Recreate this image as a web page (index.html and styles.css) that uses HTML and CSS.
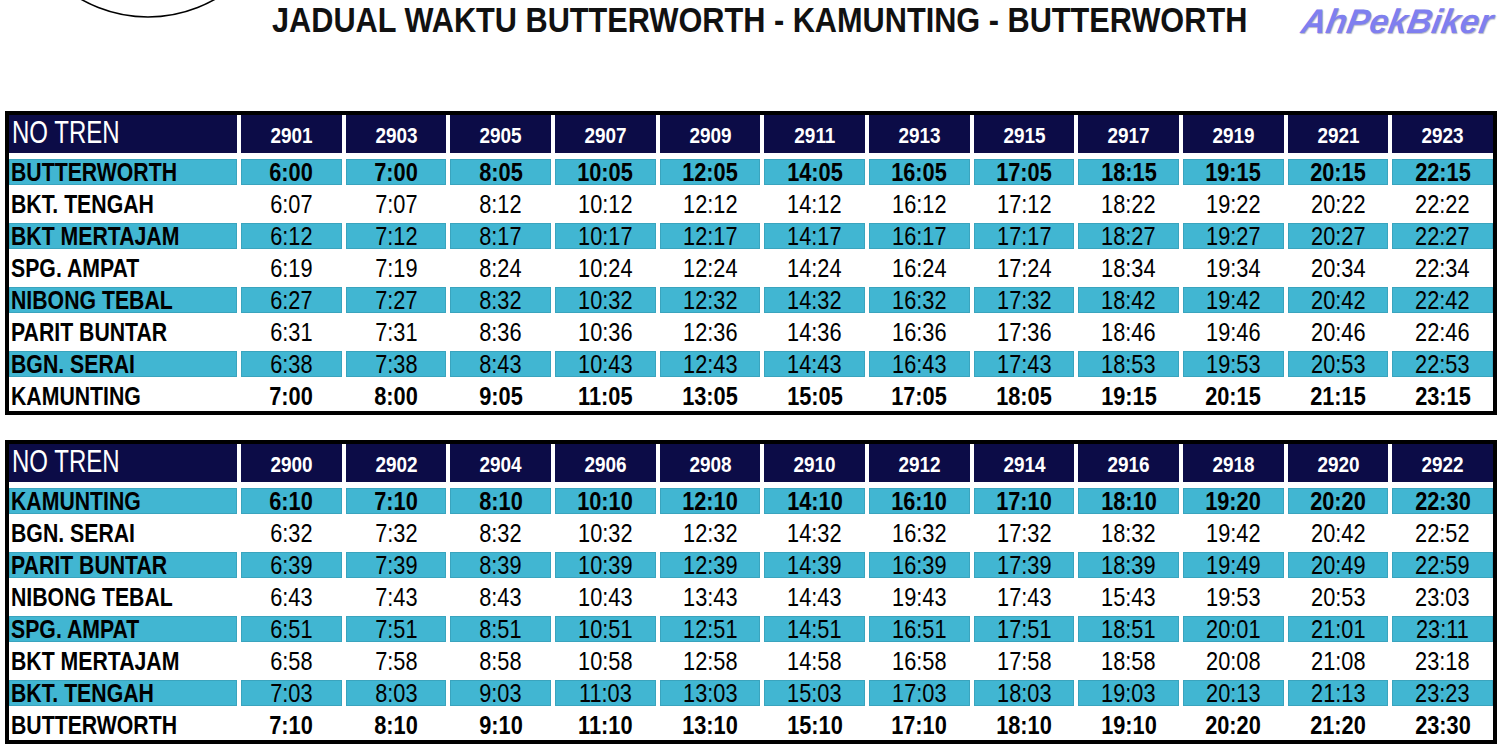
FILE: index.html
```html
<!DOCTYPE html>
<html lang="ms">
<head>
<meta charset="utf-8">
<title>Jadual Waktu Butterworth - Kamunting - Butterworth</title>
<link rel="stylesheet" href="styles.css">
</head>
<body>
<header class="top">
  <div class="arc-box">
    <svg class="arc" width="272" height="22" viewBox="0 0 272 22"><circle cx="148" cy="-118" r="135" fill="none" stroke="#000" stroke-width="1.6"/></svg>
  </div>
  <div class="title-box"><h1 class="title">JADUAL WAKTU BUTTERWORTH - KAMUNTING - BUTTERWORTH</h1></div>
  <div class="logo">AhPekBiker</div>
</header>

<main class="tables">
  <div class="tt">
    <div class="row head"><div class="hname"><span>NO TREN</span></div><div><span>2901</span></div><div><span>2903</span></div><div><span>2905</span></div><div><span>2907</span></div><div><span>2909</span></div><div><span>2911</span></div><div><span>2913</span></div><div><span>2915</span></div><div><span>2917</span></div><div><span>2919</span></div><div><span>2921</span></div><div><span>2923</span></div></div>
    <div class="row band bold"><div><span>BUTTERWORTH</span></div><div><span>6:00</span></div><div><span>7:00</span></div><div><span>8:05</span></div><div><span>10:05</span></div><div><span>12:05</span></div><div><span>14:05</span></div><div><span>16:05</span></div><div><span>17:05</span></div><div><span>18:15</span></div><div><span>19:15</span></div><div><span>20:15</span></div><div><span>22:15</span></div></div>
    <div class="row"><div><span>BKT. TENGAH</span></div><div><span>6:07</span></div><div><span>7:07</span></div><div><span>8:12</span></div><div><span>10:12</span></div><div><span>12:12</span></div><div><span>14:12</span></div><div><span>16:12</span></div><div><span>17:12</span></div><div><span>18:22</span></div><div><span>19:22</span></div><div><span>20:22</span></div><div><span>22:22</span></div></div>
    <div class="row band"><div><span>BKT MERTAJAM</span></div><div><span>6:12</span></div><div><span>7:12</span></div><div><span>8:17</span></div><div><span>10:17</span></div><div><span>12:17</span></div><div><span>14:17</span></div><div><span>16:17</span></div><div><span>17:17</span></div><div><span>18:27</span></div><div><span>19:27</span></div><div><span>20:27</span></div><div><span>22:27</span></div></div>
    <div class="row"><div><span>SPG. AMPAT</span></div><div><span>6:19</span></div><div><span>7:19</span></div><div><span>8:24</span></div><div><span>10:24</span></div><div><span>12:24</span></div><div><span>14:24</span></div><div><span>16:24</span></div><div><span>17:24</span></div><div><span>18:34</span></div><div><span>19:34</span></div><div><span>20:34</span></div><div><span>22:34</span></div></div>
    <div class="row band"><div><span>NIBONG TEBAL</span></div><div><span>6:27</span></div><div><span>7:27</span></div><div><span>8:32</span></div><div><span>10:32</span></div><div><span>12:32</span></div><div><span>14:32</span></div><div><span>16:32</span></div><div><span>17:32</span></div><div><span>18:42</span></div><div><span>19:42</span></div><div><span>20:42</span></div><div><span>22:42</span></div></div>
    <div class="row"><div><span>PARIT BUNTAR</span></div><div><span>6:31</span></div><div><span>7:31</span></div><div><span>8:36</span></div><div><span>10:36</span></div><div><span>12:36</span></div><div><span>14:36</span></div><div><span>16:36</span></div><div><span>17:36</span></div><div><span>18:46</span></div><div><span>19:46</span></div><div><span>20:46</span></div><div><span>22:46</span></div></div>
    <div class="row band"><div><span>BGN. SERAI</span></div><div><span>6:38</span></div><div><span>7:38</span></div><div><span>8:43</span></div><div><span>10:43</span></div><div><span>12:43</span></div><div><span>14:43</span></div><div><span>16:43</span></div><div><span>17:43</span></div><div><span>18:53</span></div><div><span>19:53</span></div><div><span>20:53</span></div><div><span>22:53</span></div></div>
    <div class="row bold"><div><span>KAMUNTING</span></div><div><span>7:00</span></div><div><span>8:00</span></div><div><span>9:05</span></div><div><span>11:05</span></div><div><span>13:05</span></div><div><span>15:05</span></div><div><span>17:05</span></div><div><span>18:05</span></div><div><span>19:15</span></div><div><span>20:15</span></div><div><span>21:15</span></div><div><span>23:15</span></div></div>
  </div>

  <div class="tt">
    <div class="row head"><div class="hname"><span>NO TREN</span></div><div><span>2900</span></div><div><span>2902</span></div><div><span>2904</span></div><div><span>2906</span></div><div><span>2908</span></div><div><span>2910</span></div><div><span>2912</span></div><div><span>2914</span></div><div><span>2916</span></div><div><span>2918</span></div><div><span>2920</span></div><div><span>2922</span></div></div>
    <div class="row band bold"><div><span>KAMUNTING</span></div><div><span>6:10</span></div><div><span>7:10</span></div><div><span>8:10</span></div><div><span>10:10</span></div><div><span>12:10</span></div><div><span>14:10</span></div><div><span>16:10</span></div><div><span>17:10</span></div><div><span>18:10</span></div><div><span>19:20</span></div><div><span>20:20</span></div><div><span>22:30</span></div></div>
    <div class="row"><div><span>BGN. SERAI</span></div><div><span>6:32</span></div><div><span>7:32</span></div><div><span>8:32</span></div><div><span>10:32</span></div><div><span>12:32</span></div><div><span>14:32</span></div><div><span>16:32</span></div><div><span>17:32</span></div><div><span>18:32</span></div><div><span>19:42</span></div><div><span>20:42</span></div><div><span>22:52</span></div></div>
    <div class="row band"><div><span>PARIT BUNTAR</span></div><div><span>6:39</span></div><div><span>7:39</span></div><div><span>8:39</span></div><div><span>10:39</span></div><div><span>12:39</span></div><div><span>14:39</span></div><div><span>16:39</span></div><div><span>17:39</span></div><div><span>18:39</span></div><div><span>19:49</span></div><div><span>20:49</span></div><div><span>22:59</span></div></div>
    <div class="row"><div><span>NIBONG TEBAL</span></div><div><span>6:43</span></div><div><span>7:43</span></div><div><span>8:43</span></div><div><span>10:43</span></div><div><span>13:43</span></div><div><span>14:43</span></div><div><span>19:43</span></div><div><span>17:43</span></div><div><span>15:43</span></div><div><span>19:53</span></div><div><span>20:53</span></div><div><span>23:03</span></div></div>
    <div class="row band"><div><span>SPG. AMPAT</span></div><div><span>6:51</span></div><div><span>7:51</span></div><div><span>8:51</span></div><div><span>10:51</span></div><div><span>12:51</span></div><div><span>14:51</span></div><div><span>16:51</span></div><div><span>17:51</span></div><div><span>18:51</span></div><div><span>20:01</span></div><div><span>21:01</span></div><div><span>23:11</span></div></div>
    <div class="row"><div><span>BKT MERTAJAM</span></div><div><span>6:58</span></div><div><span>7:58</span></div><div><span>8:58</span></div><div><span>10:58</span></div><div><span>12:58</span></div><div><span>14:58</span></div><div><span>16:58</span></div><div><span>17:58</span></div><div><span>18:58</span></div><div><span>20:08</span></div><div><span>21:08</span></div><div><span>23:18</span></div></div>
    <div class="row band"><div><span>BKT. TENGAH</span></div><div><span>7:03</span></div><div><span>8:03</span></div><div><span>9:03</span></div><div><span>11:03</span></div><div><span>13:03</span></div><div><span>15:03</span></div><div><span>17:03</span></div><div><span>18:03</span></div><div><span>19:03</span></div><div><span>20:13</span></div><div><span>21:13</span></div><div><span>23:23</span></div></div>
    <div class="row bold"><div><span>BUTTERWORTH</span></div><div><span>7:10</span></div><div><span>8:10</span></div><div><span>9:10</span></div><div><span>11:10</span></div><div><span>13:10</span></div><div><span>15:10</span></div><div><span>17:10</span></div><div><span>18:10</span></div><div><span>19:10</span></div><div><span>20:20</span></div><div><span>21:20</span></div><div><span>23:30</span></div></div>
  </div>
</main>
</body>
</html>
```

FILE: styles.css
```css
html, body {
  margin: 0;
  padding: 0;
  background: #ffffff;
}

body {
  width: 1500px;
  height: 748px;
  overflow: hidden;
  font-family: "Liberation Sans", Arial, sans-serif;
  color: #000;
}

.top {
  display: flex;
  align-items: flex-start;
  height: 111px;
}

.arc-box {
  flex: none;
  width: 272px;
  height: 22px;
}

.arc {
  display: block;
}

.title-box {
  flex: 1 1 auto;
  min-width: 0;
  overflow: visible;
}

.title {
  display: inline-block;
  margin: 0;
  font-family: "Liberation Sans", Arial, sans-serif;
  font-weight: bold;
  font-size: 35px;
  line-height: 40px;
  white-space: nowrap;
  color: #111;
  transform: scaleX(0.877);
  transform-origin: left center;
}

.logo {
  flex: none;
  margin-right: 7px;
  margin-top: 3px;
  font-family: "Liberation Sans", Arial, sans-serif;
  font-style: italic;
  font-weight: bold;
  font-size: 34px;
  line-height: 36px;
  color: #7f7fef;
  text-shadow: 1px 1px 1px #b8b8c8;
  transform: skewX(-10deg);
}

.tables {
  padding: 0 3px 0 5px;
}

.tt {
  border: 4px solid #000;
  display: grid;
  grid-template-columns: 228px repeat(12, 1fr);
  column-gap: 4px;
  row-gap: 6px;
  padding-bottom: 2px;
  background: #fff;
}

.tt + .tt {
  margin-top: 25px;
}

.row {
  display: contents;
}

.row > div {
  height: 26px;
  line-height: 26px;
  font-size: 25px;
  text-align: center;
  white-space: nowrap;
}

.row > div > span {
  display: inline-block;
  transform: scaleX(0.87);
}

.row > div:first-child {
  text-align: left;
  padding-left: 2px;
  font-weight: bold;
}

.row > div:first-child > span {
  transform: scaleX(0.85);
  transform-origin: left center;
}

.band > div {
  background: #41b6d2;
  box-shadow: inset 0 0 0 1px rgba(40, 110, 130, 0.25);
}

.bold > div {
  font-weight: bold;
}

.head > div {
  height: 38px;
  box-sizing: border-box;
  background: #0c0c47;
  color: #fff;
  font-size: 22px;
  font-weight: bold;
  line-height: 34px;
  padding-top: 4px;
}

.head > div > span {
  transform: scaleX(0.86);
}

.head > div.hname {
  font-size: 32px;
  font-weight: normal;
  line-height: 34px;
  padding-top: 0;
  padding-left: 3px;
}

.head > div.hname > span {
  transform: scaleX(0.75);
  transform-origin: left center;
}
```
